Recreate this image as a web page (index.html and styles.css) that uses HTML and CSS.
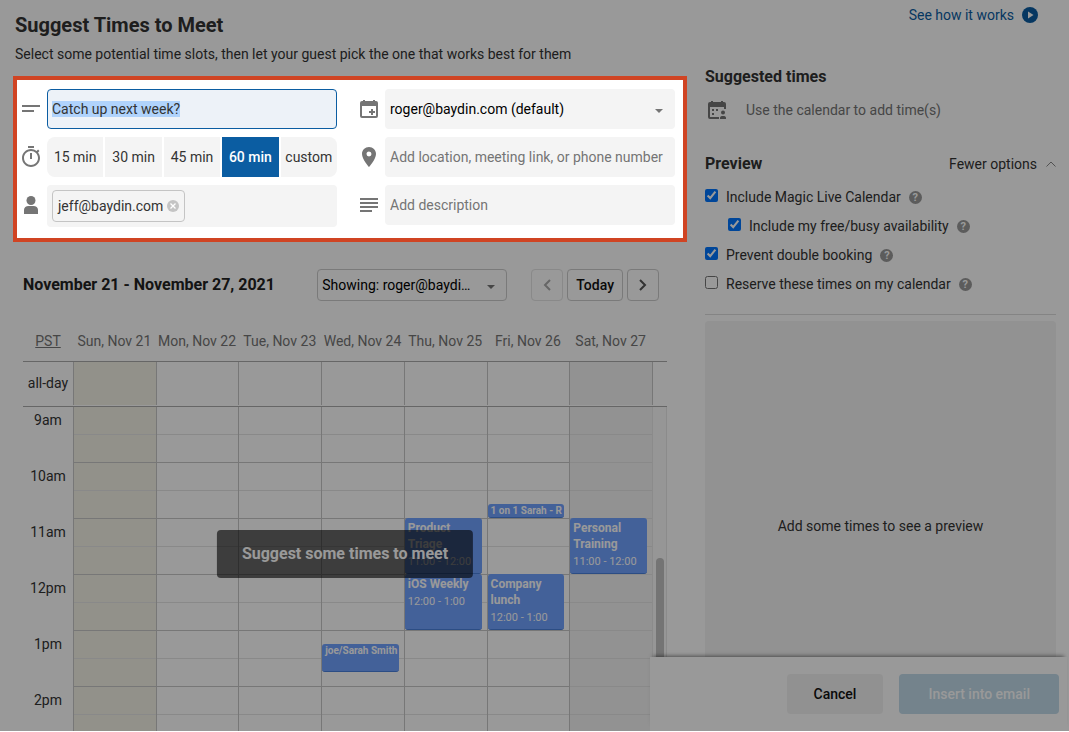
FILE: index.html
```html
<!DOCTYPE html>
<html lang="en">
<head>
    <meta charset="UTF-8">
    <meta name="viewport" content="width=device-width, initial-scale=1.0">
    <title>Suggest Times to Meet</title>
    <link rel="stylesheet" href="styles.css">
</head>
<body>
    <div class="dialog">
        <main class="main">
            <h1>Suggest Times to Meet</h1>
            <p class="intro">Select some potential time slots, then let your guest pick the one that works best for them</p>

            <form class="details">
                <div class="details-col">
                    <div class="field">
                        <svg class="icon" width="18" height="18" viewBox="0 0 18 18"><path d="M0 5h18v2H0zM0 10h12v2H0z"/></svg>
                        <input type="text" class="box title-input" id="title" aria-label="Title" value="Catch up next week?">
                    </div>
                    <div class="field">
                        <svg class="icon" width="18" height="24" viewBox="3 0 18 24"><path d="M15 1H9v2h6V1zm-4 13h2V8h-2v6zm8.03-6.61l1.42-1.42c-.43-.51-.9-.99-1.41-1.41l-1.42 1.42C16.07 4.74 14.12 4 12 4c-4.97 0-9 4.03-9 9s4.02 9 9 9 9-4.03 9-9c0-2.12-.74-4.07-1.97-5.61zM12 20c-3.87 0-7-3.13-7-7s3.13-7 7-7 7 3.13 7 7-3.13 7-7 7z"/></svg>
                        <div class="durations">
                            <button type="button">15 min</button>
                            <button type="button">30 min</button>
                            <button type="button">45 min</button>
                            <button type="button" class="active">60 min</button>
                            <button type="button">custom</button>
                        </div>
                    </div>
                    <div class="field">
                        <svg class="icon" width="18" height="20" viewBox="0 0 18 20"><circle cx="9" cy="4.500" r="4.500"/><path d="M2 18v-4c0-2.500 2-4 4.500-4h5c2.500 0 4.500 1.500 4.500 4v4z"/></svg>
                        <div class="box guests">
                            <span class="chip">jeff@baydin.com
                                <button type="button" aria-label="Remove guest"><svg width="12" height="12" viewBox="0 0 12 12"><circle cx="6" cy="6" r="6" fill="#c4c4c4"/><path d="M3.500 3.500l5 5M8.500 3.500l-5 5" stroke="#fff" stroke-width="1.300"/></svg></button>
                            </span>
                        </div>
                    </div>
                </div>
                <div class="details-col">
                    <div class="field">
                        <svg class="icon" width="18" height="18" viewBox="0 0 18 18"><path fill-rule="evenodd" d="M3 0h2v1h8V0h2v1h1a2 2 0 0 1 2 2v13a2 2 0 0 1-2 2H2a2 2 0 0 1-2-2V3a2 2 0 0 1 2-2h1zM2 6v10h14V6z"/><path d="M11 9h2v2h2v2h-2v2h-2v-2H9v-2h2z"/></svg>
                        <div class="select-wrap">
                            <select class="box" aria-label="Calendar">
                                <option>roger@baydin.com (default)</option>
                            </select>
                            <svg class="arrow" width="8" height="4" viewBox="0 0 8 4"><path d="M0 0h8L4 4z"/></svg>
                        </div>
                    </div>
                    <div class="field">
                        <svg class="icon" width="18" height="24" viewBox="3 0 18 24"><path d="M12 2C8.130 2 5 5.130 5 9c0 5.250 7 13 7 13s7-7.750 7-13c0-3.870-3.130-7-7-7zm0 9.500a2.500 2.500 0 0 1 0-5 2.500 2.500 0 0 1 0 5z"/></svg>
                        <input type="text" class="box" aria-label="Location" placeholder="Add location, meeting link, or phone number">
                    </div>
                    <div class="field">
                        <svg class="icon" width="18" height="14" viewBox="0 0 18 14"><path d="M0 0h18v2H0zM0 4h18v2H0zM0 8h18v2H0zM0 12h12v2H0z"/></svg>
                        <input type="text" class="box" aria-label="Description" placeholder="Add description">
                    </div>
                </div>
            </form>

            <section class="calendar">
                <div class="toolbar">
                    <h2>November 21 - November 27, 2021</h2>
                    <div class="select-wrap showing">
                        <select aria-label="Showing calendar">
                            <option>Showing: roger@baydi…</option>
                        </select>
                        <svg class="arrow" width="8" height="4" viewBox="0 0 8 4"><path d="M0 0h8L4 4z"/></svg>
                    </div>
                    <button type="button" class="nav" aria-label="Previous week" disabled><svg width="8" height="12" viewBox="0 0 8 12"><path d="M7 1L2 6l5 5"/></svg></button>
                    <button type="button" class="today">Today</button>
                    <button type="button" class="nav" aria-label="Next week"><svg width="8" height="12" viewBox="0 0 8 12"><path d="M1 1l5 5-5 5"/></svg></button>
                </div>

                <div class="week week-head">
                    <span class="zone">PST</span>
                    <span>Sun, Nov 21</span>
                    <span>Mon, Nov 22</span>
                    <span>Tue, Nov 23</span>
                    <span>Wed, Nov 24</span>
                    <span>Thu, Nov 25</span>
                    <span>Fri, Nov 26</span>
                    <span>Sat, Nov 27</span>
                </div>
                <div class="week all-day">
                    <span>all-day</span>
                    <div class="day sun"></div>
                    <div class="day"></div>
                    <div class="day"></div>
                    <div class="day"></div>
                    <div class="day"></div>
                    <div class="day"></div>
                    <div class="day sat"></div>
                    <div class="day"></div>
                </div>
                <div class="week slots">
                    <div class="hours">
                        <span>9am</span>
                        <span>10am</span>
                        <span>11am</span>
                        <span>12pm</span>
                        <span>1pm</span>
                        <span>2pm</span>
                    </div>
                    <div class="day sun"></div>
                    <div class="day"></div>
                    <div class="day"></div>
                    <div class="day">
                        <div class="event small at-1315"><b>joe/Sarah Smith</b></div>
                    </div>
                    <div class="day">
                        <div class="event at-11"><b>Product Triage</b><span>11:00 - 12:00</span></div>
                        <div class="event at-12"><b>iOS Weekly</b><span>12:00 - 1:00</span></div>
                    </div>
                    <div class="day">
                        <div class="event small at-1045"><b>1 on 1 Sarah - R</b></div>
                        <div class="event at-12"><b>Company lunch</b><span>12:00 - 1:00</span></div>
                    </div>
                    <div class="day sat">
                        <div class="event at-11"><b>Personal Training</b><span>11:00 - 12:00</span></div>
                    </div>
                    <div class="scroll"><div class="thumb"></div></div>
                    <div class="toast">Suggest some times to meet</div>
                </div>
            </section>
        </main>

        <aside class="side">
            <a href="#" class="how">See how it works
                <svg width="16" height="16" viewBox="0 0 16 16"><circle cx="8" cy="8" r="8" fill="#0b5da2"/><path d="M6 4.500v7L11.500 8z" fill="#fff"/></svg>
            </a>
            <h2>Suggested times</h2>
            <div class="hint">
                <svg class="icon" width="18" height="18" viewBox="0 0 18 18"><path d="M3 0h2v1h8V0h2v1h1a2 2 0 0 1 2 2v5h-2V6H2v10h9v2H2a2 2 0 0 1-2-2V3a2 2 0 0 1 2-2h1z"/><path d="M4 8h2v2H4zM8 8h2v2H8zM4 12h2v2H4z"/><circle cx="15" cy="11.500" r="2"/><path d="M12 18v-1c0-1.500 1-2 3-2s3 .500 3 2v1z"/></svg>
                Use the calendar to add time(s)
            </div>
            <div class="preview-head">
                <h2>Preview</h2>
                <button type="button" class="fewer">Fewer options
                    <svg width="10" height="6" viewBox="0 0 10 6"><path d="M.500 5.500L5 1l4.500 4.500"/></svg>
                </button>
            </div>
            <div class="options">
                <div class="option"><input type="checkbox" id="live" checked><label for="live">Include Magic Live Calendar</label><span class="help">?</span></div>
                <div class="option nested"><input type="checkbox" id="busy" checked><label for="busy">Include my free/busy availability</label><span class="help">?</span></div>
                <div class="option"><input type="checkbox" id="double" checked><label for="double">Prevent double booking</label><span class="help">?</span></div>
                <div class="option"><input type="checkbox" id="reserve"><label for="reserve">Reserve these times on my calendar</label><span class="help">?</span></div>
            </div>
            <div class="preview">Add some times to see a preview</div>
        </aside>

        <footer class="actions">
            <button type="button" class="cancel">Cancel</button>
            <button type="button" class="insert">Insert into email</button>
        </footer>
    </div>
    <script>
        const title = document.getElementById('title');
        title.focus();
        title.select();
    </script>
</body>
</html>
```
FILE: styles.css
```css
* {
    box-sizing: border-box;
}
body {
    margin: 0;
    font-family: Roboto, "Liberation Sans", sans-serif;
    font-size: 14px;
    line-height: 20px;
    color: #333;
    background: #fff;
}
h1, h2, p {
    margin: 0;
}
h1 {
    margin: 0 2px;
    font-size: 20px;
    line-height: 24px;
}
h2 {
    font-size: 16px;
    line-height: 20px;
}
button, input, select {
    font: inherit;
    color: inherit;
    margin: 0;
}
button {
    padding: 0;
    border: none;
    background: none;
}
svg {
    display: block;
    flex: none;
}
.dialog {
    position: relative;
    display: grid;
    grid-template-columns: minmax(0, 1fr) 351px;
    gap: 18px;
    height: calc(100vh - 1px);
    padding: 0 13px;
    overflow: hidden;
}
.main {
    display: flex;
    flex-direction: column;
    min-height: 0;
    padding-top: 13px;
}
.intro {
    margin: 7px 2px 12px;
}

/* highlighted form, its shadow dims the rest of the dialog */
.details {
    position: relative;
    z-index: 10;
    display: grid;
    grid-template-columns: 1fr 1fr;
    gap: 23px;
    padding: 9px 8px 11px 5px;
    border: 4px solid #d04423;
    background: #fff;
    box-shadow: 0 0 0 200vmax rgba(0, 0, 0, 0.4);
}
.details-col {
    display: flex;
    flex-direction: column;
    gap: 8px;
}
.field {
    display: grid;
    grid-template-columns: 18px minmax(0, 1fr);
    gap: 7px;
    align-items: center;
}
.icon {
    fill: #757575;
}
.box {
    width: 100%;
    height: 40px;
    padding: 0 5px;
    border: none;
    border-radius: 4px;
    background: #f4f4f4;
}
.box::placeholder {
    color: #757575;
}
.title-input {
    padding: 0 4px;
    border: 1px solid #0b5da2;
    background: #edf2f8;
    outline: none;
}
.title-input::selection {
    color: #333;
    background: #b0d3fc;
}
.durations {
    display: grid;
    grid-template-columns: repeat(5, 1fr);
    gap: 2px;
    height: 40px;
    border-radius: 8px;
    overflow: hidden;
}
.durations button {
    background: #f4f4f4;
}
.durations .active {
    color: #fff;
    font-weight: 500;
    background: #0b5da2;
}
.guests {
    height: 42px;
    padding: 5px;
}
.chip {
    display: inline-flex;
    align-items: center;
    gap: 4px;
    height: 32px;
    padding: 0 5px;
    border: 1px solid #c4c4c4;
    border-radius: 4px;
}
.select-wrap {
    display: grid;
    align-items: center;
}
.select-wrap select {
    grid-area: 1 / 1;
    appearance: none;
    color: #000;
}
.arrow {
    grid-area: 1 / 1;
    justify-self: end;
    margin: 3px 12px 0 0;
    fill: #757575;
    pointer-events: none;
}

.calendar {
    display: flex;
    flex-direction: column;
    flex: 1;
    min-height: 0;
    margin: 27px 20px 0 10px;
}
.toolbar {
    display: flex;
    gap: 4px;
    margin-right: 8px;
}
.toolbar h2 {
    margin-right: auto;
    line-height: 32px;
    color: #222;
}
.showing {
    width: 190px;
    margin-right: 20px;
}
.showing select, .nav, .today {
    height: 32px;
    border: 1px solid #ccc;
    border-radius: 4px;
}
.showing select {
    padding: 0 4px;
    background: #fff;
}
.nav {
    display: flex;
    align-items: center;
    justify-content: center;
    width: 32px;
}
.nav svg {
    fill: none;
    stroke: #555;
    stroke-width: 2;
}
.nav:disabled {
    border-color: #e4e4e4;
}
.nav:disabled svg {
    stroke: #aaa;
}
.today {
    padding: 0 8px;
    color: #111;
    font-weight: 500;
}
.week {
    display: grid;
    grid-template-columns: 50px repeat(7, minmax(0, 1fr)) 15px;
}
.week-head {
    padding: 30px 0 10px;
    text-align: center;
    white-space: nowrap;
    color: #757575;
}
.zone {
    text-decoration: underline;
}
.all-day {
    height: 46px;
    padding-bottom: 2px;
    border-top: 1px solid #aaa;
    border-bottom: 1px solid #aaa;
    line-height: 43px;
    text-align: center;
}
.day {
    border-left: 1px solid #c6c6c6;
}
.sun {
    background-color: #f3f2e6;
}
.sat {
    background-color: #f3f3f3;
}
.slots {
    position: relative;
    flex: 1;
    min-height: 0;
    overflow: hidden;
}
.hours span {
    display: block;
    height: 56px;
    line-height: 26px;
    text-align: center;
}
/* one row is a quarter of an hour, the first one shares a pixel with the header line */
.slots .day {
    display: grid;
    grid-template-rows: 13px repeat(23, 14px);
    padding-right: 5px;
    background-image: linear-gradient(transparent 55px, #c6c6c6 55px), linear-gradient(transparent 27px, #e4e4e4 27px);
    background-size: 100% 56px, 100% 28px;
}
.slots .sat {
    background-image: linear-gradient(transparent 27px, #e4e4e4 27px);
    background-size: 100% 28px;
}
.event {
    padding: 2px 0 0 3px;
    border-bottom: 1px solid #4a80dd;
    border-radius: 3px;
    color: #fff;
    background: #71a2ff;
    font-size: 12px;
    line-height: 16px;
    overflow: hidden;
}
.event b, .event span {
    display: block;
}
.event span {
    margin-top: 2px;
    font-size: 11px;
    white-space: nowrap;
}
.event.small {
    padding-top: 0;
    font-size: 10px;
    line-height: 13px;
    white-space: nowrap;
}
.at-1045 {
    grid-row: 8 / span 1;
}
.at-11 {
    grid-row: 9 / span 4;
}
.at-12 {
    grid-row: 13 / span 4;
}
.at-1315 {
    grid-row: 18 / span 2;
}
.scroll {
    padding: 151px 2px 0;
    border: 1px solid #e8e8e8;
    border-width: 0 1px;
    background: #fafafa;
}
.thumb {
    width: 8px;
    height: 160px;
    margin: 0 auto;
    border-radius: 4px;
    background: #c1c1c1;
}
.toast {
    position: absolute;
    top: 123px;
    left: 50%;
    transform: translateX(-50%);
    padding: 14px 25px;
    border-radius: 4px;
    color: #fff;
    background: rgba(0, 0, 0, 0.6);
    font-size: 16px;
    font-weight: bold;
    white-space: nowrap;
}

.side {
    display: flex;
    flex-direction: column;
    padding-top: 5px;
}
.how {
    display: flex;
    align-items: center;
    align-self: flex-end;
    gap: 8px;
    margin: 0 18px 42px 0;
    color: #0b5da2;
    text-decoration: none;
}
.hint {
    display: flex;
    align-items: center;
    gap: 20px;
    margin: 13px 0 34px 3px;
    color: #757575;
}
.preview-head {
    display: flex;
    justify-content: space-between;
}
.fewer {
    display: flex;
    align-items: center;
    gap: 9px;
}
.fewer svg {
    fill: none;
    stroke: #888;
}
.options {
    display: flex;
    flex-direction: column;
    gap: 9px;
    padding: 13px 0 20px;
    border-bottom: 1px solid #ddd;
}
.option {
    display: flex;
    align-items: center;
    gap: 8px;
}
.option input {
    margin-bottom: 3px;
}
.nested {
    margin-left: 23px;
}
.help {
    width: 13px;
    height: 13px;
    border-radius: 50%;
    color: #fff;
    background: #999;
    font-size: 11px;
    font-weight: bold;
    line-height: 13px;
    text-align: center;
}
.preview {
    display: flex;
    flex: 1;
    align-items: center;
    justify-content: center;
    margin-top: 6px;
    border-radius: 4px;
    background: #f3f3f3;
}

/* action bar floats over the calendar and the preview */
.actions {
    position: absolute;
    right: 2px;
    bottom: 0;
    display: flex;
    gap: 16px;
    justify-content: flex-end;
    width: 39%;
    padding: 17px 8px;
    background: #fff;
    box-shadow: 0 -4px 4px -3px rgba(0, 0, 0, 0.5);
}
.actions button {
    height: 40px;
    border-radius: 4px;
    font-weight: 500;
}
.cancel {
    padding: 0 27px;
    color: #111;
    background: #f2f2f2;
}
.insert {
    padding: 0 29px;
    color: #fff;
    background: #c1dae9;
}
```
